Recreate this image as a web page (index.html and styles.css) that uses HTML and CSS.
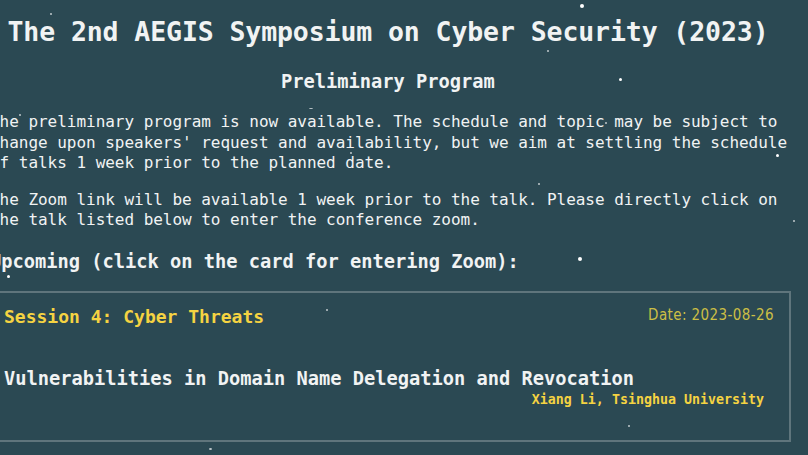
FILE: index.html
```html
<!DOCTYPE html>
<html lang="en">
<head>
<meta charset="utf-8">
<title>The 2nd AEGIS Symposium on Cyber Security (2023)</title>
<link rel="stylesheet" href="styles.css">
</head>
<body>
<div class="stars" aria-hidden="true">
  <span class="star s1"></span>
  <span class="star s2 big"></span>
  <span class="star s3"></span>
  <span class="star s4 mid"></span>
  <span class="star s5"></span>
  <span class="star s6"></span>
  <span class="star s7"></span>
  <span class="star s8 mid"></span>
  <span class="star s9"></span>
  <span class="star s10"></span>
  <span class="star s11"></span>
  <span class="star s12 big"></span>
  <span class="star s13 mid"></span>
  <span class="star s14"></span>
  <span class="star s15"></span>
  <span class="star s16"></span>
</div>
<main class="page">
  <h1 class="title">The 2nd AEGIS Symposium on Cyber Security (2023)</h1>
  <h2 class="subtitle">Preliminary Program</h2>
  <p class="text">The preliminary program is now available. The schedule and topic may be subject to change upon speakers' request and availability, but we aim at settling the schedule of talks 1 week prior to the planned date.</p>
  <p class="text">The Zoom link will be available 1 week prior to the talk. Please directly click on the talk listed below to enter the conference zoom.</p>
  <h3 class="section">Upcoming (click on the card for entering Zoom):</h3>
  <a class="card" href="#">
    <div class="card-head">
      <span class="session">Session 4: Cyber Threats</span>
      <span class="date">Date: 2023-08-26</span>
    </div>
    <div class="talk">Vulnerabilities in Domain Name Delegation and Revocation</div>
    <div class="speaker">Xiang Li, Tsinghua University</div>
  </a>
</main>
</body>
</html>
```
FILE: styles.css
```css
html, body {
  margin: 0;
  padding: 0;
}
body {
  background: #2b4953;
  color: #f1f3f3;
  font-family: "DejaVu Sans Mono", "Liberation Mono", monospace;
  overflow: hidden;
  height: 455px;
  position: relative;
}
.stars {
  position: absolute;
  inset: 0;
  pointer-events: none;
}
.star {
  position: absolute;
  width: 2px;
  height: 2px;
  border-radius: 50%;
  background: rgba(255, 255, 255, 0.7);
}
.star.mid { width: 3px; height: 3px; background: #fff; }
.star.big { width: 4px; height: 4px; background: #fff; }
.s1 { left: 50px; top: 13px; }
.s2 { left: 580px; top: 4px; }
.s3 { left: 547px; top: 50px; }
.s4 { left: 619px; top: 78px; width: 3px; height: 5px; }
.s5 { left: 309px; top: 108px; width: 4px; height: 1px; }
.s6 { left: 19px; top: 114px; }
.s7 { left: 605px; top: 122px; }
.s8 { left: 776px; top: 154px; }
.s9 { left: 350px; top: 152px; }
.s10 { left: 538px; top: 183px; }
.s11 { left: 793px; top: 220px; }
.s12 { left: 578px; top: 257px; }
.s13 { left: 7px; top: 275px; }
.s14 { left: 326px; top: 309px; }
.s15 { left: 209px; top: 448px; width: 3px; height: 2px; }
.s16 { left: 628px; top: 425px; }

.page {
  position: relative;
  margin-left: -10px;
  width: 796px;
}
.title {
  margin: 15px 0 0;
  font-size: 26.5px;
  line-height: 34px;
  font-weight: bold;
  text-align: center;
  letter-spacing: -0.1px;
}
.subtitle {
  margin: 21px 0 0;
  font-size: 18.7px;
  line-height: 24px;
  font-weight: bold;
  text-align: center;
}
.text {
  margin: 18px -14px 0 0;
  font-size: 16px;
  line-height: 20.5px;
  letter-spacing: -0.03px;
}
.text + .text {
  margin-top: 16px;
}
.section {
  margin: 19px 0 0;
  font-size: 18.7px;
  line-height: 24px;
  font-weight: bold;
}
.card {
  display: block;
  margin: 17px -5px 0 0;
  border: 2px solid #5f757c;
  padding: 12px 15px 31px 12px;
  color: inherit;
  text-decoration: none;
}
.card-head {
  display: flex;
  justify-content: space-between;
  align-items: center;
}
.session {
  color: #f5d342;
  font-size: 18px;
  line-height: 24px;
  font-weight: bold;
}
.date {
  color: #cbbf45;
  font-family: "DejaVu Sans Condensed", "DejaVu Sans", sans-serif;
  font-size: 15px;
  line-height: 20px;
  letter-spacing: 0.4px;
  margin-top: -3px;
}
.talk {
  margin-top: 38px;
  font-size: 18.7px;
  line-height: 24px;
  font-weight: bold;
}
.speaker {
  color: #f5d342;
  font-size: 13.3px;
  line-height: 18px;
  font-weight: bold;
  text-align: right;
  margin-right: 10px;
}
```
